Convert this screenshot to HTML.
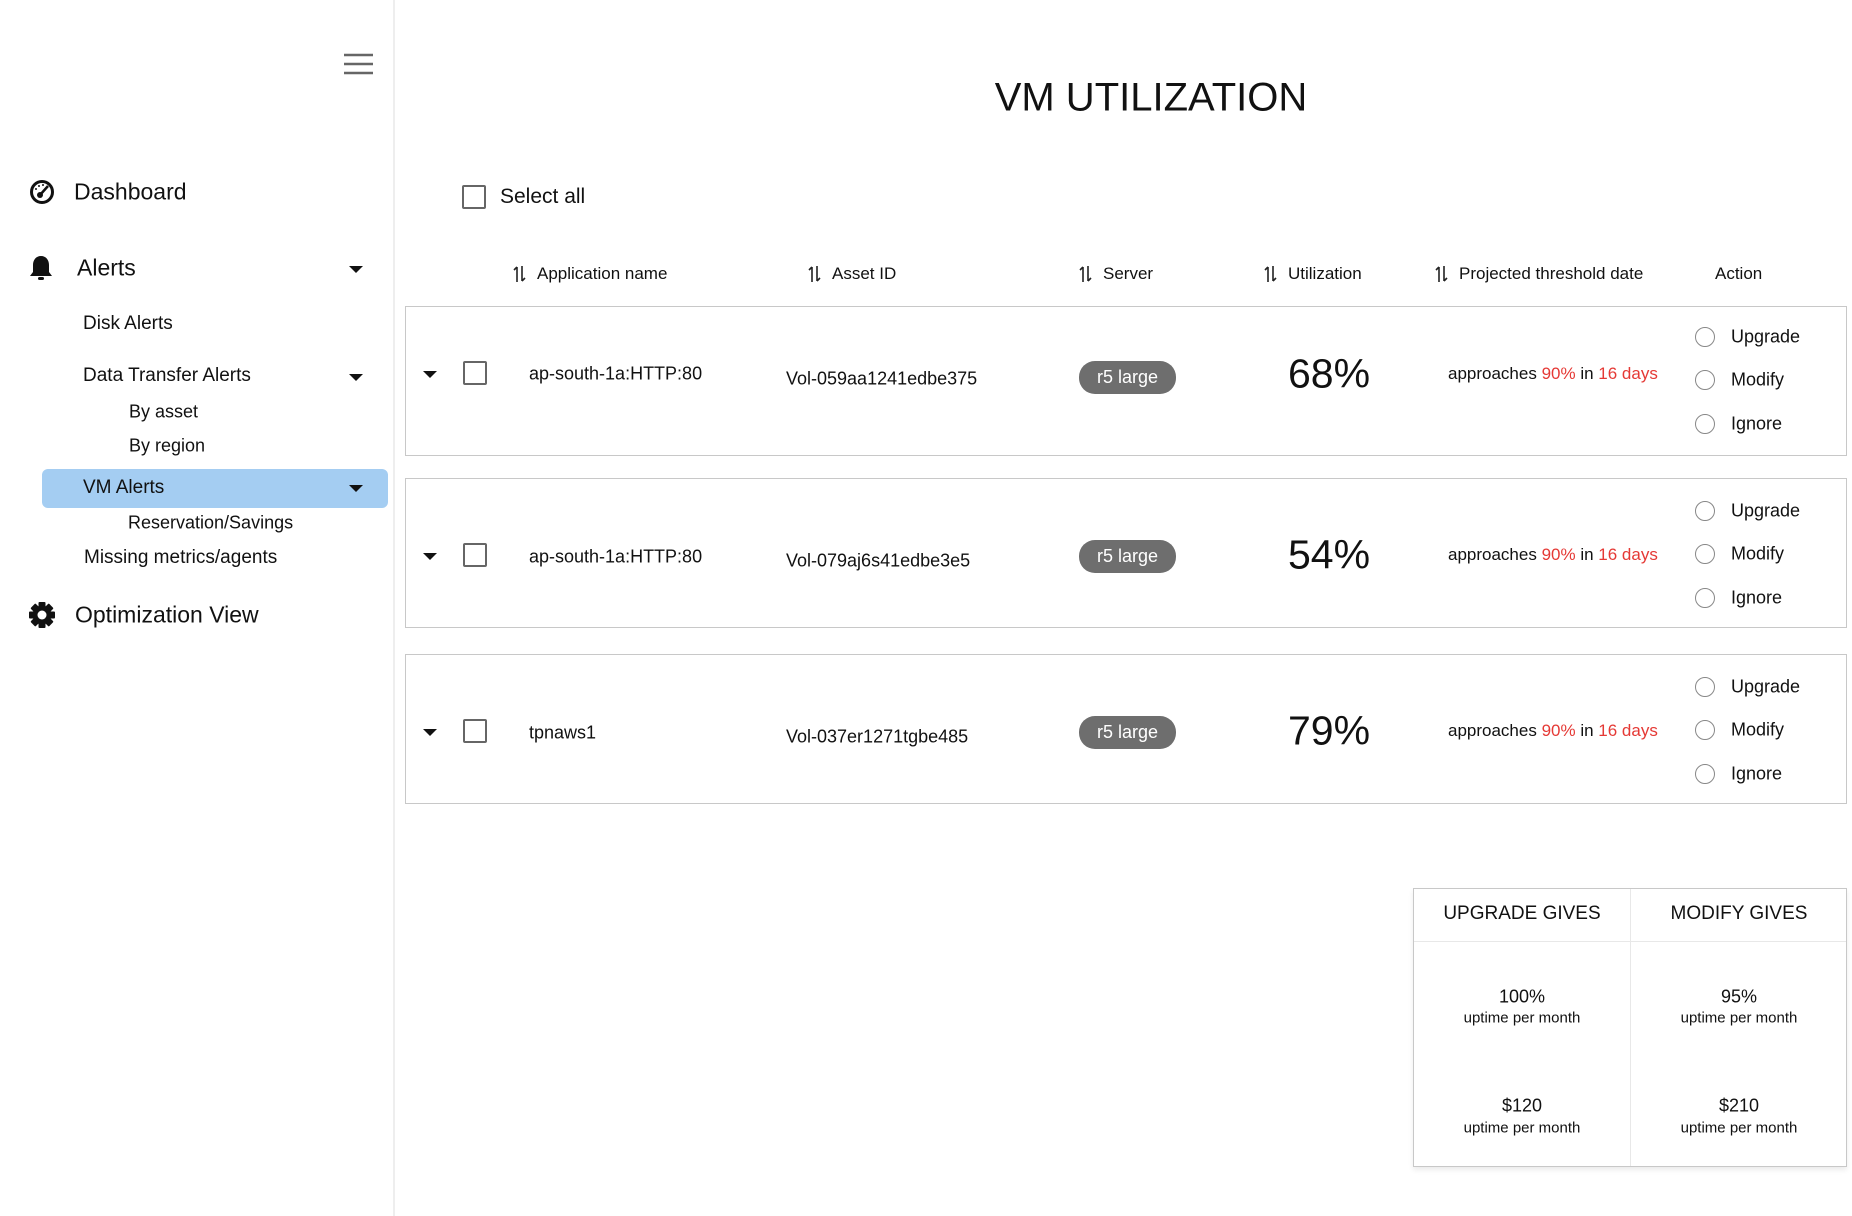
<!DOCTYPE html>
<html><head><meta charset="utf-8">
<style>
*{margin:0;padding:0;box-sizing:border-box}
body{width:1852px;height:1216px;position:relative;background:#fff;font-family:"Liberation Sans",Arial,sans-serif;color:#111;overflow:hidden}
.a{position:absolute;white-space:nowrap}
.vc{transform:translateY(-50%)}
.side{position:absolute;left:0;top:0;width:395px;height:1216px;border-right:2px solid #eee}
.caret{position:absolute;width:0;height:0;border-left:7px solid transparent;border-right:7px solid transparent;border-top:7px solid #111}
.cb{position:absolute;width:24px;height:24px;border:2.5px solid #666;border-radius:2px;background:#fff}
.row{position:absolute;left:405px;width:1442px;height:150px;border:1.5px solid #c8c8c8;background:#fff}
.pill{position:absolute;left:673px;top:54px;width:97px;height:33px;border-radius:16px;background:#6e6e6e;color:#fff;font-size:18px;text-align:center;line-height:33px}
.radio{position:absolute;left:1289px;width:20px;height:20px;border:1.5px solid #888;border-radius:50%}
.rl{position:absolute;left:1325px;font-size:18px;transform:translateY(-50%)}
.red{color:#e53935}
.hd{font-size:17px}
</style></head><body>
<div class="side"></div>
<svg class="a" style="left:344px;top:53px" width="29" height="22"><g stroke="#666" stroke-width="2.5"><line x1="0" y1="2" x2="29" y2="2"/><line x1="0" y1="11" x2="29" y2="11"/><line x1="0" y1="20" x2="29" y2="20"/></g></svg>

<svg class="a" style="left:29px;top:179px" width="26" height="26" viewBox="0 0 26 26"><circle cx="13" cy="13" r="10.5" fill="none" stroke="#111" stroke-width="3"/><line x1="11" y1="16" x2="19" y2="7" stroke="#111" stroke-width="2.5"/><circle cx="11" cy="16" r="3" fill="#111"/><g fill="#111"><circle cx="7" cy="10" r="1"/><circle cx="10" cy="7" r="1"/><circle cx="14" cy="6" r="1"/></g></svg>
<div class="a vc" style="left:74px;top:192px;font-size:23px">Dashboard</div>

<svg class="a" style="left:28px;top:254px" width="26" height="28" viewBox="0 0 26 28"><path d="M13 2c-5 0-8 4-8 9v7l-3 4h22l-3-4v-7c0-5-3-9-8-9z" fill="#111"/><rect x="10" y="23" width="6" height="3" rx="1.5" fill="#111"/></svg>
<div class="a vc" style="left:77px;top:268px;font-size:23px">Alerts</div>
<div class="caret" style="left:349px;top:266px"></div>

<div class="a vc" style="left:83px;top:324px;font-size:19px">Disk Alerts</div>
<div class="a vc" style="left:83px;top:376px;font-size:19px">Data Transfer Alerts</div>
<div class="caret" style="left:349px;top:374px"></div>
<div class="a vc" style="left:129px;top:412px;font-size:18px">By asset</div>
<div class="a vc" style="left:129px;top:446px;font-size:18px">By region</div>
<div class="a" style="left:42px;top:469px;width:346px;height:39px;background:#a4cdf2;border-radius:6px"></div>
<div class="a vc" style="left:83px;top:488px;font-size:19px">VM Alerts</div>
<div class="caret" style="left:349px;top:485px"></div>
<div class="a vc" style="left:128px;top:523px;font-size:18px">Reservation/Savings</div>
<div class="a vc" style="left:84px;top:558px;font-size:19px">Missing metrics/agents</div>
<svg class="a" style="left:28px;top:601px" width="28" height="28" viewBox="0 0 28 28"><g fill="#111" transform="translate(14 14)"><rect x="-3.5" y="-13" width="7" height="26" rx="1"/><rect x="-3.5" y="-13" width="7" height="26" rx="1" transform="rotate(45)"/><rect x="-3.5" y="-13" width="7" height="26" rx="1" transform="rotate(90)"/><rect x="-3.5" y="-13" width="7" height="26" rx="1" transform="rotate(135)"/><circle r="9.5"/></g><circle cx="14" cy="14" r="4.5" fill="#fff"/></svg>
<div class="a vc" style="left:75px;top:615px;font-size:23px">Optimization View</div>

<div class="a vc" style="left:1151px;top:98px;font-size:40px;transform:translate(-50%,-50%)">VM UTILIZATION</div>

<div class="cb" style="left:462px;top:185px"></div>
<div class="a vc" style="left:500px;top:197px;font-size:21px">Select all</div>

<svg width="0" height="0" style="position:absolute"><defs><g id="srt"><path d="M4 17V2M1 5l3-3" stroke="#222" stroke-width="1.6" fill="none"/><path d="M9 1v15M12 13l-3 3" stroke="#222" stroke-width="1.6" fill="none"/></g></defs></svg>
<svg class="a" style="left:513px;top:265px" width="14" height="19"><use href="#srt"/></svg>
<div class="a vc hd" style="left:537px;top:274px">Application name</div>
<svg class="a" style="left:808px;top:265px" width="14" height="19"><use href="#srt"/></svg>
<div class="a vc hd" style="left:832px;top:274px">Asset ID</div>
<svg class="a" style="left:1079px;top:265px" width="14" height="19"><use href="#srt"/></svg>
<div class="a vc hd" style="left:1103px;top:274px">Server</div>
<svg class="a" style="left:1264px;top:265px" width="14" height="19"><use href="#srt"/></svg>
<div class="a vc hd" style="left:1288px;top:274px">Utilization</div>
<svg class="a" style="left:1435px;top:265px" width="14" height="19"><use href="#srt"/></svg>
<div class="a vc hd" style="left:1459px;top:274px">Projected threshold date</div>
<div class="a vc hd" style="left:1715px;top:274px">Action</div>

<div class="row" style="top:306px">
 <div class="caret" style="left:17px;top:64px"></div>
 <div class="cb" style="left:57px;top:54px"></div>
 <div class="a vc" style="left:123px;top:67px;font-size:18px">ap-south-1a:HTTP:80</div>
 <div class="a vc" style="left:380px;top:72px;font-size:18px">Vol-059aa1241edbe375</div>
 <div class="pill">r5 large</div>
 <div class="a vc" style="left:882px;top:67px;font-size:41px">68%</div>
 <div class="a vc" style="left:1042px;top:67px;font-size:17px">approaches <span class="red">90%</span> in <span class="red">16 days</span></div>
 <div class="radio" style="top:20px"></div><div class="rl" style="top:30px">Upgrade</div>
 <div class="radio" style="top:63px"></div><div class="rl" style="top:73px">Modify</div>
 <div class="radio" style="top:107px"></div><div class="rl" style="top:117px">Ignore</div>
</div>
<div class="row" style="top:478px">
 <div class="caret" style="left:17px;top:74px"></div>
 <div class="cb" style="left:57px;top:64px"></div>
 <div class="a vc" style="left:123px;top:78px;font-size:18px">ap-south-1a:HTTP:80</div>
 <div class="a vc" style="left:380px;top:82px;font-size:18px">Vol-079aj6s41edbe3e5</div>
 <div class="pill" style="top:61px">r5 large</div>
 <div class="a vc" style="left:882px;top:76px;font-size:41px">54%</div>
 <div class="a vc" style="left:1042px;top:76px;font-size:17px">approaches <span class="red">90%</span> in <span class="red">16 days</span></div>
 <div class="radio" style="top:22px"></div><div class="rl" style="top:32px">Upgrade</div>
 <div class="radio" style="top:65px"></div><div class="rl" style="top:75px">Modify</div>
 <div class="radio" style="top:109px"></div><div class="rl" style="top:119px">Ignore</div>
</div>
<div class="row" style="top:654px">
 <div class="caret" style="left:17px;top:74px"></div>
 <div class="cb" style="left:57px;top:64px"></div>
 <div class="a vc" style="left:123px;top:78px;font-size:18px">tpnaws1</div>
 <div class="a vc" style="left:380px;top:82px;font-size:18px">Vol-037er1271tgbe485</div>
 <div class="pill" style="top:61px">r5 large</div>
 <div class="a vc" style="left:882px;top:76px;font-size:41px">79%</div>
 <div class="a vc" style="left:1042px;top:76px;font-size:17px">approaches <span class="red">90%</span> in <span class="red">16 days</span></div>
 <div class="radio" style="top:22px"></div><div class="rl" style="top:32px">Upgrade</div>
 <div class="radio" style="top:65px"></div><div class="rl" style="top:75px">Modify</div>
 <div class="radio" style="top:109px"></div><div class="rl" style="top:119px">Ignore</div>
</div>

<div class="a" style="left:1413px;top:888px;width:434px;height:279px;border:1.5px solid #c8c8c8;box-shadow:0 3px 5px rgba(0,0,0,0.08)"></div>
<div class="a" style="left:1414px;top:941px;width:432px;height:1px;background:#e8e8e8"></div>
<div class="a" style="left:1630px;top:889px;width:1px;height:277px;background:#e8e8e8"></div>
<div class="a" style="left:1414px;top:914px;width:216px;text-align:center;font-size:19px;transform:translateY(-50%)">UPGRADE GIVES</div>
<div class="a" style="left:1631px;top:914px;width:216px;text-align:center;font-size:19px;transform:translateY(-50%)">MODIFY GIVES</div>
<div class="a" style="left:1414px;top:997px;width:216px;text-align:center;font-size:18px;transform:translateY(-50%)">100%</div>
<div class="a" style="left:1414px;top:1018px;width:216px;text-align:center;font-size:15px;transform:translateY(-50%)">uptime per month</div>
<div class="a" style="left:1631px;top:997px;width:216px;text-align:center;font-size:18px;transform:translateY(-50%)">95%</div>
<div class="a" style="left:1631px;top:1018px;width:216px;text-align:center;font-size:15px;transform:translateY(-50%)">uptime per month</div>
<div class="a" style="left:1414px;top:1106px;width:216px;text-align:center;font-size:18px;transform:translateY(-50%)">$120</div>
<div class="a" style="left:1414px;top:1128px;width:216px;text-align:center;font-size:15px;transform:translateY(-50%)">uptime per month</div>
<div class="a" style="left:1631px;top:1106px;width:216px;text-align:center;font-size:18px;transform:translateY(-50%)">$210</div>
<div class="a" style="left:1631px;top:1128px;width:216px;text-align:center;font-size:15px;transform:translateY(-50%)">uptime per month</div>
</body></html>
